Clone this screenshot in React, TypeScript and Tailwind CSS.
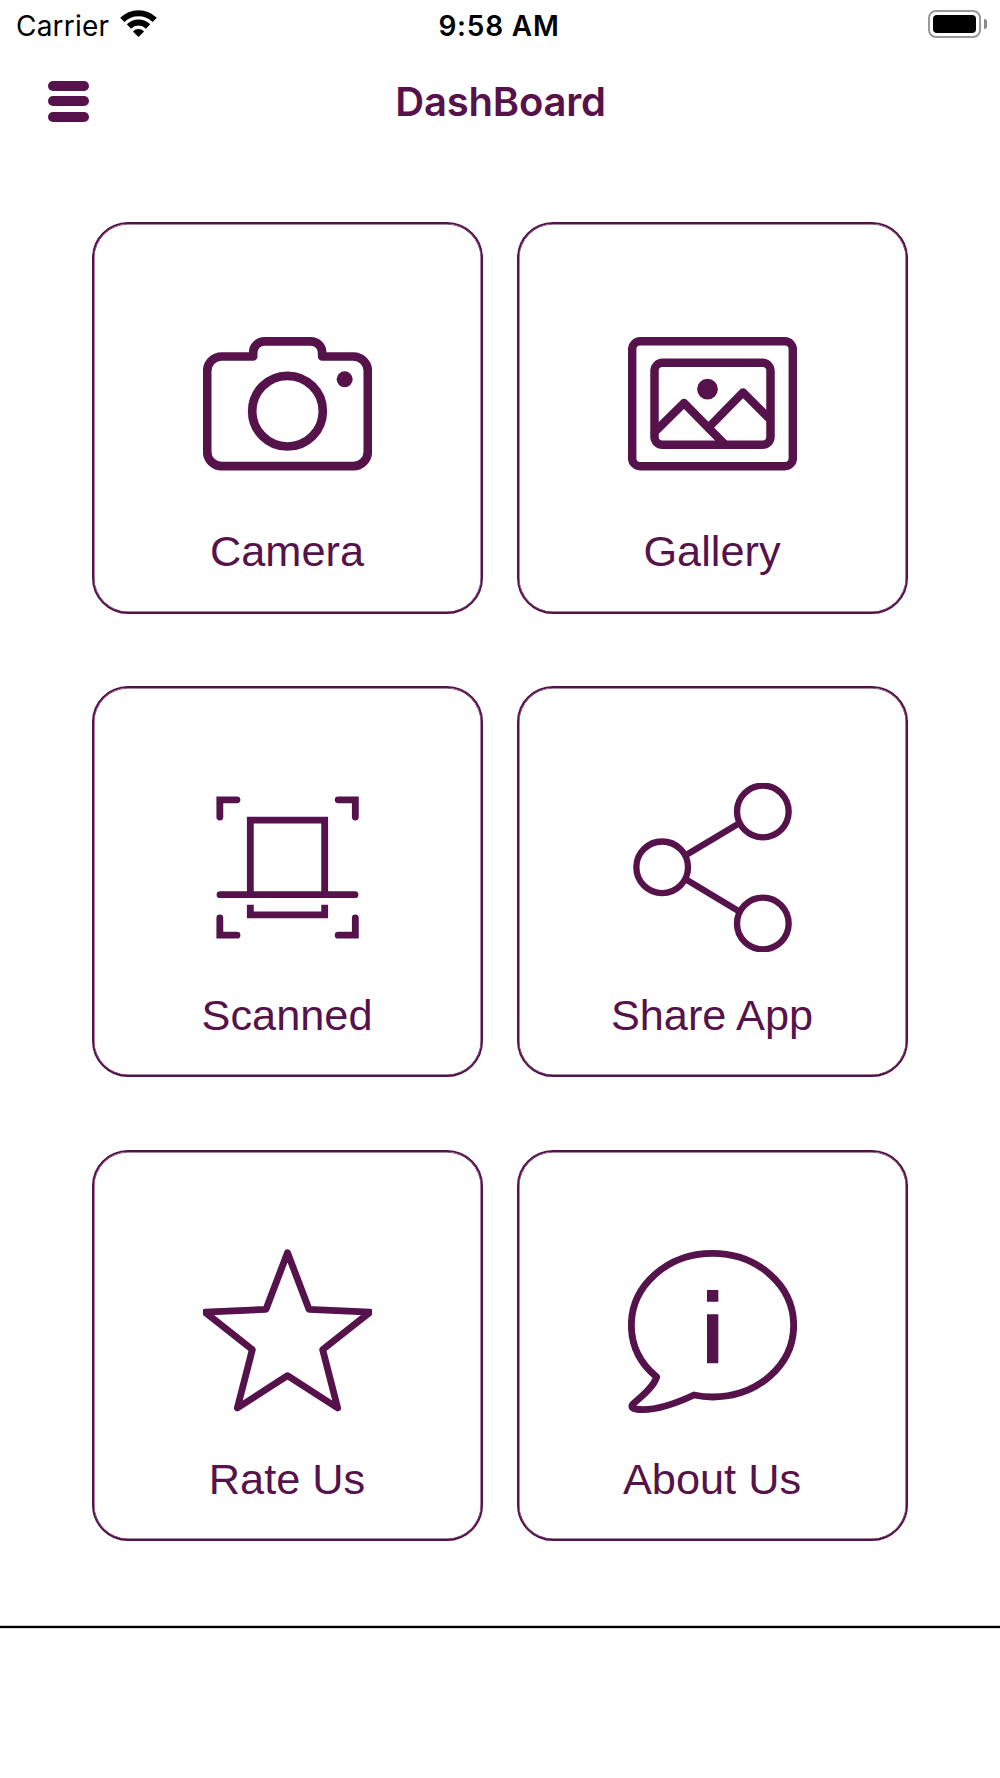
import type { ReactNode } from "react";

type Tile = { label: string; viewBox: string; icon: ReactNode };

const tiles: Tile[] = [
  {
    label: "Camera",
    viewBox: "369 326 507 507",
    icon: (
      <g strokeWidth="26">
        <path
          strokeLinejoin="round"
          d="M519.5 438.5H425a43.5 43.5 0 0 0-43.5 43.5V724a43.5 43.5 0 0 0 43.5 43.5H820a43.5 43.5 0 0 0 43.5-43.5V482a43.5 43.5 0 0 0-43.5-43.5H726.5V427a34 34 0 0 0-34-34H553.5a34 34 0 0 0-34 34Z"
        />
        <circle cx="622.5" cy="602.5" r="106" />
        <circle cx="794" cy="507" r="24" fill="currentColor" stroke="none" />
      </g>
    ),
  },
  {
    label: "Gallery",
    viewBox: "384 326 507 507",
    icon: (
      <g strokeWidth="25.5">
        <rect x="396.5" y="393" width="482" height="374.5" rx="24" />
        <rect x="463.5" y="457.5" width="348" height="246" rx="24" />
        <circle cx="622.5" cy="536.5" r="31" fill="currentColor" stroke="none" />
        <path strokeLinejoin="round" strokeWidth="25" d="M467 662l85-84 121 123M629 648l100-102 78 78" />
      </g>
    ),
  },
  {
    label: "Scanned",
    viewBox: "369 338 507 507",
    icon: (
      <g strokeWidth="20.5">
        <path
          strokeLinecap="round"
          d="M419.5 440V388.5H471M774.5 388.5H826V440M419.5 743V794.5H471M774.5 794.5H826V743M420 673H825"
        />
        <path d="M511 673V449.5H734V673M511 703V733.5H734V703" />
      </g>
    ),
  },
  {
    label: "Share App",
    viewBox: "384 338 507 507",
    icon: (
      <g strokeWidth="19">
        <circle cx="788.5" cy="423.5" r="77.5" />
        <circle cx="486.5" cy="591" r="77.5" />
        <circle cx="788.5" cy="759.5" r="77.5" />
        <path d="M557 555L719 458M557 627L719 724" />
      </g>
    ),
  },
  {
    label: "Rate Us",
    viewBox: "369 350 507 507",
    icon: (
      <path
        strokeWidth="20.5"
        strokeLinejoin="round"
        d="M622.5 367L687 537L870 545.5L728 658L773 833L622.5 736L472 833L517 658L375 545.5L558 537Z"
      />
    ),
  },
  {
    label: "About Us",
    viewBox: "384 350 507 507",
    icon: (
      <g strokeWidth="20.5">
        <path
          strokeLinejoin="round"
          d="M470 740C420 699 394 645 394 585C394 465 503 369 637.5 369S881 465 881 585S772 800 637.5 800C617 800 600 798 582 794C520 823 468 838 428 838C398 838 388 830 401 819C436 790 462 766 470 740Z"
        />
        <path fill="currentColor" stroke="none" d="M621 479h34v35h-34zM621 552h34v147h-34z" />
      </g>
    ),
  },
];

function StatusBar() {
  return (
    <div className="grid h-[50px] grid-cols-3 items-start font-['Inter',sans-serif] text-[28px] leading-[34px] text-black">
      <div className="flex pl-[16px] pt-[9px]">
        <span className="w-[94px] whitespace-nowrap tracking-[0.2px]">Carrier</span>
        <svg className="ml-[10px] h-[28px] w-[37px]" viewBox="0 0 37 28" fill="none" stroke="black" aria-hidden="true">
          <path strokeWidth="6" d="M2.3 10.8a23 23 0 0 1 32.4 0" />
          <path strokeWidth="6" d="M8.9 17.5a13.7 13.7 0 0 1 19.2 0" />
          <path fill="black" stroke="none" d="M12.9 22.4a7.9 7.9 0 0 1 11.2 0L18.5 28Z" />
        </svg>
      </div>
      <div className="pr-[2px] pt-[9px] text-center font-[570] tracking-[0.8px]">9:58 AM</div>
      <div className="flex items-center justify-end pr-[13px] pt-[10px]">
        <div className="h-[28px] w-[53px] rounded-[8px] border-2 border-[#999] p-[3px]">
          <div className="h-full w-full rounded-[4px] bg-black" />
        </div>
        <div className="ml-[3px] h-[10px] w-[3px] rounded-r-full bg-[#888]" />
      </div>
    </div>
  );
}

function Header() {
  return (
    <header className="grid h-[103px] grid-cols-3 items-center">
      <button type="button" aria-label="Menu" className="-mt-px ml-12 flex w-[41px] flex-col gap-[5.5px]">
        <span className="h-[10px] rounded-full bg-[#56134b]" />
        <span className="h-[10px] rounded-full bg-[#56134b]" />
        <span className="h-[10px] rounded-full bg-[#56134b]" />
      </button>
      <h1 className="pl-px text-center font-['Inter',sans-serif] text-[40px] font-semibold tracking-[-0.2px]">DashBoard</h1>
    </header>
  );
}

export default function App() {
  return (
    <div className="flex h-[1778px] w-[1000px] flex-col bg-white text-[#56134b]">
      <StatusBar />
      <Header />
      <main className="mt-[69.3px] grid grid-cols-[391px_391px] justify-center gap-x-[34px] gap-y-[72.5px]">
        {tiles.map((tile) => (
          <button
            key={tile.label}
            type="button"
            className="flex h-[391.3px] flex-col items-center rounded-[36px] border-2 border-[#56134b] pt-[95px] shadow-[inset_0_0_0_0.5px_#56134b]"
          >
            <svg
              className="h-[169px] w-[169px] shrink-0"
              viewBox={tile.viewBox}
              fill="none"
              stroke="currentColor"
              aria-hidden="true"
            >
              {tile.icon}
            </svg>
            <span className="mt-[38px] whitespace-nowrap pr-px font-['Liberation_Sans',sans-serif] text-[43.3px] leading-[50px]">
              {tile.label}
            </span>
          </button>
        ))}
      </main>
      <footer className="mt-auto h-[152px] border-t-2 border-black shadow-[0_-1px_0_#c4c4c4,inset_0_1px_0_#dcdcdc]" />
    </div>
  );
}
